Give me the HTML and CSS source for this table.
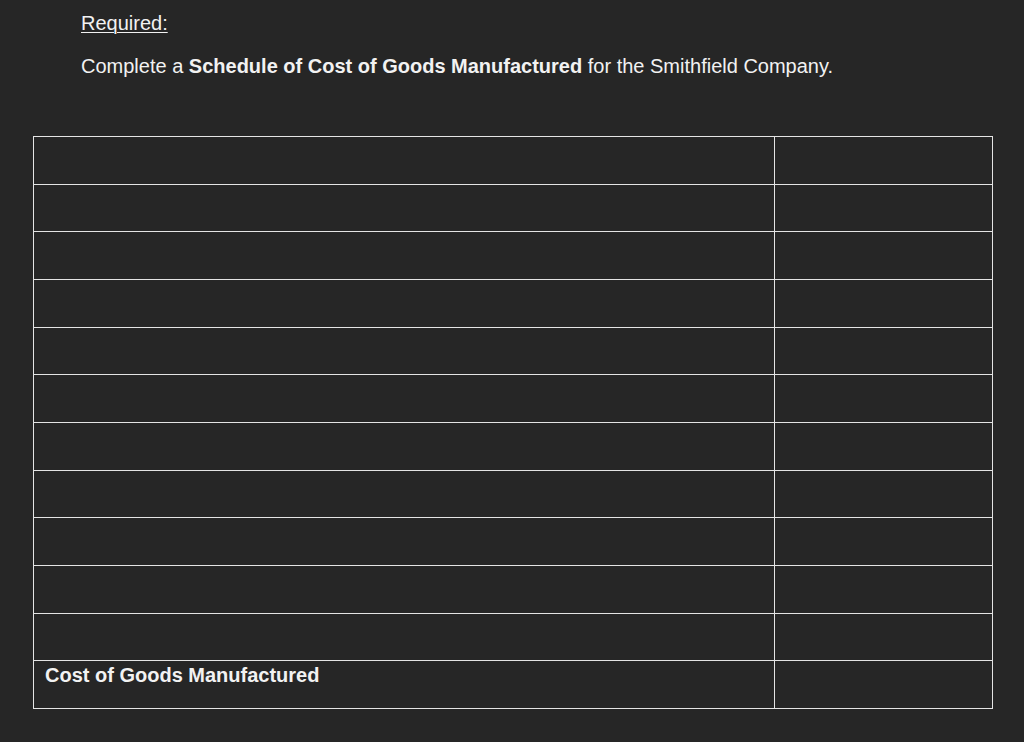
FILE: index.html
```html
<!DOCTYPE html>
<html>
<head>
<meta charset="utf-8">
<link rel="stylesheet" href="styles.css">
</head>
<body>
<div class="intro">
  <p class="req">Required:</p>
  <p class="task">Complete a <b>Schedule of Cost of Goods Manufactured</b> for the Smithfield Company.</p>
</div>
<table class="sched">
  <colgroup><col class="c1"><col class="c2"></colgroup>
  <tr><td></td><td></td></tr>
  <tr><td></td><td></td></tr>
  <tr><td></td><td></td></tr>
  <tr><td></td><td></td></tr>
  <tr><td></td><td></td></tr>
  <tr><td></td><td></td></tr>
  <tr><td></td><td></td></tr>
  <tr><td></td><td></td></tr>
  <tr><td></td><td></td></tr>
  <tr><td></td><td></td></tr>
  <tr><td></td><td></td></tr>
  <tr><td class="total">Cost of Goods Manufactured</td><td></td></tr>
</table>
</body>
</html>
```
FILE: styles.css
```css
html, body {
  margin: 0;
  padding: 0;
  background: #262626;
  color: #f2f2f2;
  font-family: "Liberation Sans", Arial, sans-serif;
}
.intro {
  padding: 11px 0 0 81px;
}
.req {
  margin: 0;
  font-size: 20px;
  line-height: 24px;
  text-decoration: underline;
  text-underline-offset: 2px;
  text-decoration-thickness: 1px;
}
.task {
  margin: 19px 0 0 0;
  font-size: 20px;
  line-height: 24px;
}
.sched {
  margin: 58px 0 0 33px;
  border-collapse: collapse;
  table-layout: fixed;
  width: 959px;
}
.c1 { width: 741px; }
.c2 { width: 218px; }
.sched tr {
  height: 47.67px;
}
.sched td {
  border: 1px solid #e4e4e4;
  padding: 0;
  vertical-align: top;
}
.sched td.total {
  font-weight: bold;
  font-size: 20px;
  line-height: 24px;
  padding: 2px 0 0 11px;
  color: #f2f2f2;
}
```
